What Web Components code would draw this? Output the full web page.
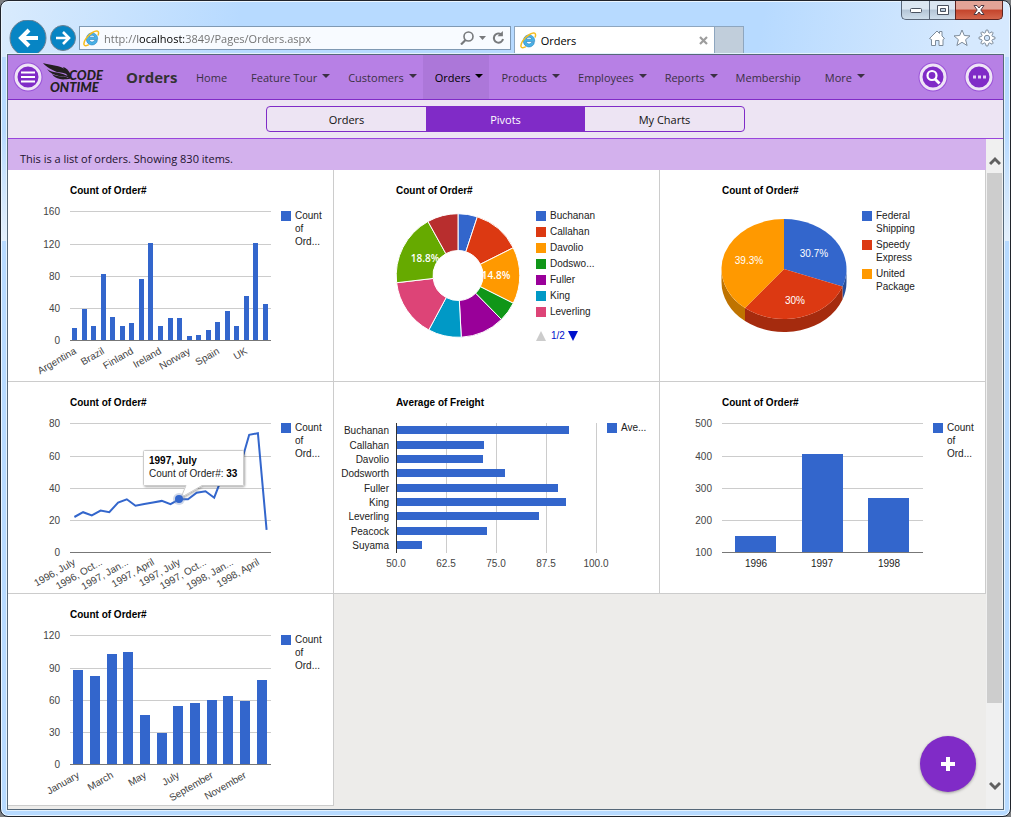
<!DOCTYPE html>
<html lang="en">
<head>
<meta charset="utf-8">
<title>Orders</title>
<style>
  html { background: #7d7f82; }
  body { margin: 0; font-family: "Open Sans", "Noto Sans", sans-serif; font-size: 11px; color: #333; }
</style>
</head>
<body>
<browser-window url="http://localhost:3849/Pages/Orders.aspx" page-title="Orders">
  <app-header slot="page" heading="Orders">
    <nav-item>Home</nav-item>
    <nav-item menu>Feature Tour</nav-item>
    <nav-item menu>Customers</nav-item>
    <nav-item menu current>Orders</nav-item>
    <nav-item menu>Products</nav-item>
    <nav-item menu>Employees</nav-item>
    <nav-item menu>Reports</nav-item>
    <nav-item>Membership</nav-item>
    <nav-item menu>More</nav-item>
  </app-header>
  <view-tabs slot="page" views="Orders,Pivots,My Charts" selected="1"></view-tabs>
  <scroll-pane slot="page">
    <info-bar>This is a list of orders. Showing 830 items.</info-bar>
    <chart-board>
      <column-chart data-chart="country"></column-chart>
      <donut-chart></donut-chart>
      <pie-chart></pie-chart>
      <line-chart></line-chart>
      <bar-chart></bar-chart>
      <column-chart data-chart="year"></column-chart>
      <column-chart data-chart="month"></column-chart>
    </chart-board>
  </scroll-pane>
</browser-window>

<script>
function define(name, html, setup) {
  const tpl = document.createElement('template');
  tpl.innerHTML = html;
  customElements.define(name, class extends HTMLElement {
    constructor() {
      super();
      this.attachShadow({ mode: 'open' }).append(tpl.content.cloneNode(true));
    }
    connectedCallback() {
      if (setup && !this.ready) { this.ready = true; setup(this, this.shadowRoot); }
    }
  });
}

/* ---------- browser window ---------- */
define('browser-window', `
<style>
  :host { display: flex; flex-direction: column; box-sizing: border-box; min-height: 100vh;
    border: 1px solid #20242c; border-radius: 8px; padding: 0 5px 5px;
    background: linear-gradient(100deg, #d9ebfd 0, rgba(217,235,253,0) 240px, rgba(217,235,253,0) 75%, #d6e9fe 95%) 0 0 / 100% 56px no-repeat,
      linear-gradient(#b7daff 130px, #e3effb 240px) 0 0 / 100% 240px no-repeat, #b7daff;
    box-shadow: inset 0 0 0 1px #eaf5ff; }
  .caption { display: flex; justify-content: flex-end; height: 19px; margin-right: 2px; }
  .caption button { box-sizing: border-box; height: 19px; padding: 0; border: 1px solid #596678; border-top: 0; border-right: 0;
    background: linear-gradient(#dbe6f1 45%, #b4c5d6 50%, #cfdeec); display: grid; place-items: center; }
  .min { width: 28px; border-bottom-left-radius: 5px; }
  .max { width: 26px; }
  .caption .close { width: 48px; border-right: 1px solid #5b2320; border-color: #5b2320; border-bottom-right-radius: 5px;
    background: linear-gradient(#e2a497 45%, #c4442c 50%, #d4664c); }
  .bar { display: flex; height: 33px; overflow: hidden; }
  button, a { font: inherit; }
  .round { border: 0; padding: 0; background: none; display: block; flex: none; }
  .back { width: 38px; height: 37px; margin-left: 3px; }
  .fwd { width: 26px; height: 26px; margin: 5px 3px 0 3px; }
  .address { box-sizing: border-box; display: flex; align-items: center; height: 24px; margin-top: 6px; flex: 422 1 0;
    border: 1px solid #7f99b3; background: #f8fbff; padding: 0 4px 0 3px; gap: 4px; min-width: 0; }
  .address input { flex: 1; min-width: 0; border: 0; padding: 0; outline: 0; height: 20px; font: 11px "Open Sans", sans-serif;
    -webkit-text-fill-color: transparent; -webkit-background-clip: text; background-clip: text;
    background-image: linear-gradient(90deg, #6d6d6d 34px, #000 34px, #000 80px, #6d6d6d 80px); }
  .address button { border: 0; background: none; padding: 0; display: block; }
  .tab { box-sizing: border-box; display: flex; align-items: center; flex: none; width: 201px; margin: 6px 0 0 3px; height: 27px; gap: 4px;
    border: 1px solid #8ea6bf; border-bottom: 0; background: #fff; padding: 0 6px 0 5px; color: #000; }
  .tab a { flex: 1; color: inherit; text-decoration: none; }
  .tab button { border: 0; background: none; padding: 0; display: block; }
  .new { box-sizing: border-box; flex: none; width: 29px; margin-top: 6px; height: 27px; border: 1px solid #8ea6bf; border-width: 1px 1px 0 0; padding: 0; background: #c1cedb; }
  .tools { flex: 253 1 0; display: flex; justify-content: flex-end; gap: 5px; padding: 8px 8px 0 0; }
  .tools button { border: 0; background: none; padding: 0; width: 20px; height: 20px; }
  svg { display: block; }
  .page { flex: 1; display: flex; flex-direction: column; border: 1px solid #566879; box-shadow: 0 0 0 1px #e4f2fd; margin: 1px; position: relative; background: #edecea; }
  .add { position: absolute; right: 27px; bottom: 17px; width: 56px; height: 56px; border: 0; border-radius: 50%; padding: 0;
    background: #802bc7; display: grid; place-items: center; box-shadow: 0 1px 3px rgba(0,0,0,.35); }
</style>
<div class="caption">
  <button class="min" aria-label="Minimize"><svg width="14" height="8"><rect x="1.5" y="2.5" width="11" height="4" rx="1" fill="#fff" stroke="#4a5260"/></svg></button>
  <button class="max" aria-label="Maximize"><svg width="14" height="12"><path d="M1.500 1.500h11v9h-11zM4.500 4.500v3h5v-3z" fill="#fff" fill-rule="evenodd" stroke="#4a5260"/></svg></button>
  <button class="close" aria-label="Close window"><svg width="14" height="12"><path d="M2 1.500h3l2 2.500 2-2.500h3L8.800 6 12 10.500H9L7 8l-2 2.500H2L5.200 6z" fill="#fff" stroke="#4d3a44"/></svg></button>
</div>
<div class="bar">
  <button class="round back" aria-label="Back"><svg width="38" height="37" viewBox="0 0 38 37"><circle cx="19" cy="18" r="18" fill="#0785c4" stroke="#6c8091"/><path d="M29 18H12M20 10l-8 8 8 8" fill="none" stroke="#fff" stroke-width="4"/></svg></button>
  <button class="round fwd" aria-label="Forward"><svg width="26" height="26" viewBox="0 0 26 26"><circle cx="13" cy="13" r="12.500" fill="#0785c4" stroke="#6c8091"/><path d="M6 13h12M13 7l6 6-6 6" fill="none" stroke="#fff" stroke-width="2.600"/></svg></button>
  <div class="address">
    <ie-icon></ie-icon><input aria-label="Address" spellcheck="false">
    <button aria-label="Search"><svg width="14" height="14" fill="none" stroke="#77797c"><circle cx="8.500" cy="5.500" r="4.500" stroke-width="1.600"/><path d="M5.500 9L1 13.500" stroke-width="2.200"/></svg></button>
    <button aria-label="Show address list"><svg width="9" height="6"><path d="M1 1h7L4.500 5z" fill="#77797c"/></svg></button>
    <button aria-label="Refresh"><svg width="15" height="14" fill="none" stroke="#77797c" stroke-width="2"><path d="M10 3.200A4.600 4.600 0 1 0 12 8"/><path d="M6.500 5.200h5.400V0z" fill="#77797c" stroke="none"/></svg></button>
  </div>
  <div class="tab"><ie-icon></ie-icon><a href="#"></a>
    <button aria-label="Close tab"><svg width="9" height="9"><path d="M1 1l7 7M8 1L1 8" stroke="#9d9d9d" stroke-width="2.200"/></svg></button></div>
  <button class="new" aria-label="New tab"></button>
  <div class="tools">
    <button aria-label="Home"><svg width="20" height="20" viewBox="0 0 20 20"><path d="M2.500 10.500L10 3l2.500 2.500V3.500h2.500V8l2.500 2.500-1.500 1V17.500h-4v-5h-3.500v5h-4v-6z" fill="#fff" stroke="#7d8b9a"/></svg></button>
    <button aria-label="Favorites"><svg width="20" height="20" viewBox="0 0 20 20"><path d="M10 2l2.300 5.500 5.700.4-4.400 3.800 1.500 5.800L10 14.300l-5.100 3.200 1.500-5.800L2 7.900l5.700-.4z" fill="#fff" stroke="#7d8b9a"/></svg></button>
    <button aria-label="Tools"><svg width="20" height="20" viewBox="0 0 20 20"><g fill="#fff" stroke="#7d8b9a"><path class="gear"/><circle cx="10" cy="10" r="2.700" fill="#cfe4fb"/></g></svg></button>
  </div>
</div>
<main class="page"><slot name="page"></slot>
  <button class="add" aria-label="New order"><svg width="14" height="14"><path d="M7 0v14M0 7h14" stroke="#fff" stroke-width="4"/></svg></button>
</main>`, (host, root) => {
  root.querySelector('input').value = host.getAttribute('url');
  root.querySelector('.tab a').textContent = host.getAttribute('page-title');
  let d = '';
  for (let i = 0; i < 32; i++) {
    const r = i % 4 < 2 ? 8 : 5.6, a = (i - 0.5) * Math.PI / 16;
    d += (i ? 'L' : 'M') + (10 + r * Math.sin(a)).toFixed(1) + ' ' + (10 - r * Math.cos(a)).toFixed(1);
  }
  root.querySelector('.gear').setAttribute('d', d + 'z');
});

define('ie-icon', `
<style>:host { display: block; width: 17px; height: 17px; flex: none; } svg { display: block; }</style>
<svg width="17" height="17" viewBox="0 0 17 17"><path d="M14.700 9.500H6.300c.2 2.600 4 3.400 5 1h3.100c-1.200 6.300-11 6-11-1.500 0-8.300 11.700-8 11.300.5zM6.400 7.200h5.300c-.3-2.700-4.900-2.700-5.300 0z" fill="#49b1e6" stroke="#1f7fc0" stroke-width=".6"/><path d="M15 5.500c1.800-4.700-1-5.800-5.500-3C4.500 5.300.2 11.500 1 14.600c.5 1.700 2.600 1.400 4.800.1" fill="none" stroke="#f5bd20" stroke-width="1.500"/></svg>`);

/* ---------- application header ---------- */
define('app-header', `
<style>
  :host { display: flex; align-items: center; height: 44px; background: #b780e5; border-bottom: 1px solid #802bc7; padding: 0 9px 0 5px; }
  .logo { display: block; margin-left: 0; }
  h1 { margin: 0 8px 0 18px; width: 50px; font-size: 15px; line-height: 20px; white-space: nowrap; }
  nav { display: flex; flex: 1; align-self: stretch; }
  button { width: 30px; height: 30px; border: 0; padding: 0; background: none; flex: none; }
  .search { margin-right: 16px; }
  svg { display: block; }
  text { font: italic 900 13px Lato, sans-serif; }
</style>
<button aria-label="Menu"><svg width="30" height="30"><circle cx="15" cy="15" r="14.500" fill="#9a52d8"/><circle cx="15" cy="15" r="12" fill="#802bc7" stroke="#eee4f6" stroke-width="3"/><path d="M8 10.500h14M8 15h14M8 19.500h14" stroke="#fff" stroke-width="2"/></svg></button>
<svg class="logo" width="65" height="36" viewBox="0 0 65 36" fill="#231f20" role="img" aria-label="Code OnTime">
  <path d="M0 4C7 6 14 6 20 9c4 2 6 5 8 10-5-6-9-5-14-6C9 11 3 8 0 4z"/><path d="M4 10c5 4 11 3 16 5 4 2 7 2 8 4-5-2-8-1-12-2-5-1-9-3-12-7z"/><path d="M9 15c5 3 10 2 14 3 2 1 4 1 5 2-5 0-8 1-11 0-4-1-6-2-8-5z"/>
  <path d="M20 8c4 1 7 5 8 9l-2 3z"/>
  <text x="26" y="21">CODE</text>
  <text x="7" y="33">ONTIME</text>
</svg>
<h1></h1>
<nav><slot></slot></nav>
<button class="search" aria-label="Search"><svg width="30" height="30"><circle cx="15" cy="15" r="14.500" fill="#9a52d8"/><circle cx="15" cy="15" r="12" fill="#802bc7" stroke="#eee4f6" stroke-width="3"/><circle cx="14" cy="13.500" r="4.500" fill="none" stroke="#fff" stroke-width="2.200"/><path d="M17 17l4.500 4.500" stroke="#fff" stroke-width="2.800"/></svg></button>
<button aria-label="More actions"><svg width="30" height="30"><circle cx="15" cy="15" r="14.500" fill="#9a52d8"/><circle cx="15" cy="15" r="12" fill="#802bc7" stroke="#eee4f6" stroke-width="3"/><path d="M9 13.500h3v3H9zM14 13.500h3v3h-3zM19 13.500h3v3h-3z" fill="#e6d3f5"/></svg></button>`,
(host, root) => { root.querySelector('h1').textContent = host.getAttribute('heading'); });

define('nav-item', `
<style>
  :host { display: block; }
  a { display: flex; align-items: center; box-sizing: border-box; height: 100%; padding: 0 12px; color: #3b3044; text-decoration: none; font-size: 11px; white-space: nowrap; }
  :host([menu]) a { padding-right: 6px; }
  :host([menu]) a::after { content: ""; margin: 0 0 2px 5px; border: 4px solid transparent; border-top-color: currentColor; border-bottom: 0; }
  :host([current]) a { background: #ac77d9; color: #000; }
</style>
<a href="#"><slot></slot></a>`);

define('view-tabs', `
<style>
  :host { display: flex; justify-content: center; align-items: center; height: 38px; background: #ede4f3; border-bottom: 1px solid #9a45dc; }
  div { display: flex; box-sizing: border-box; width: 100%; max-width: 479px; height: 26px; border: 1px solid #802bc7; border-radius: 4px; overflow: hidden; }
  button { flex: 1; border: 0; padding: 0; background: none; color: #111; font: 11px "Open Sans", sans-serif; }
  button[aria-selected=true] { background: #802bc7; color: #fff; }
</style>
<div role="tablist"></div>`, (host, root) => {
  host.getAttribute('views').split(',').forEach((name, i) => {
    const b = document.createElement('button');
    b.textContent = name;
    b.setAttribute('role', 'tab');
    b.setAttribute('aria-selected', String(String(i) === host.getAttribute('selected')));
    root.querySelector('div').append(b);
  });
});

define('scroll-pane', `
<style>
  :host { display: flex; flex: 1; }
  .content { flex: 1; min-width: 0; }
  .track { box-sizing: border-box; width: 17px; padding: 10px 1px 13px; background: #f0f0f0; display: grid; grid-template-rows: 24px 1fr 21px; }
  .thumb { height: 88%; background: #cdcdcd; }
  button { border: 0; padding: 0; background: none; display: grid; place-items: center; }
</style>
<div class="content"><slot></slot></div>
<div class="track">
  <button aria-label="Scroll up"><svg width="12" height="10"><path d="M1 8l5-5 5 5" fill="none" stroke="#606060" stroke-width="3"/></svg></button>
  <div class="thumb"></div>
  <button aria-label="Scroll down"><svg width="12" height="10"><path d="M1 2l5 5 5-5" fill="none" stroke="#606060" stroke-width="3"/></svg></button>
</div>`);

define('info-bar', `
<style>:host { display: block; box-sizing: border-box; height: 31px; padding: 10px 12px 0; line-height: 20px; background: #d3b1ed; color: #22122f; white-space: nowrap; }</style>
<slot></slot>`);

define('chart-board', `
<style>
  :host { display: grid; grid-template-columns: repeat(3, 1fr); }
  ::slotted(*) { background: #fff; border: 1px solid #ccc; border-width: 0 1px 1px 0; }
</style>
<slot></slot>`);

/* ---------- charts ---------- */
const COLORS = ['#3366cc', '#dc3912', '#ff9900', '#109618', '#990099', '#0099c6', '#dd4477', '#66aa00', '#b82e2e'];
const LEFT = 62, WIDTH = 201, TOP = 41, BASE = 170;
const STYLE = `<style>
  :host { display: block; }
  svg { display: block; width: 100%; height: auto; font: 10px "Liberation Sans", Arial, sans-serif; fill: #222; }
  .title, .b { font-weight: bold; fill: #000; }
  .axis { fill: #444; }
  .end { text-anchor: end; }
  .mid { text-anchor: middle; }
  .pct { fill: #fff; text-anchor: middle; }
</style>`;
const rect = (x, y, w, h, c) => `<rect x="${x}" y="${y}" width="${w}" height="${h}" fill="${c}"/>`;
const text = (x, y, s, cls = '') => `<text x="${x}" y="${y}" class="${cls}">${s}</text>`;
const slanted = (x, y, s) => `<text transform="translate(${x} ${y}) rotate(-30)" class="end axis">${s}</text>`;
const draw = (title, body) => `${STYLE}<svg viewBox="0 0 325 211" role="img" aria-label="${title}">${text(LEFT, 24, title, 'title')}${body}</svg>`;
const legend = (x, entries) => {
  let y = TOP, out = '';
  entries.forEach((lines, i) => {
    out += rect(x, y, 10, 10, COLORS[i]);
    lines.forEach((s, k) => { out += text(x + 14, y + 8 + k * 13, s); });
    y += 3 + 13 * lines.length;
  });
  return out;
};
const valueAxis = (labels) => labels.map((s, i) => {
  const y = BASE - Math.floor(i * 129 / 4);
  return rect(LEFT, y, WIDTH, 1, '#ccc') + text(52, y + 4, s, 'end axis');
}).join('');
const baseline = rect(LEFT, BASE, WIDTH, 1, '#777');
const COUNT = [['Count', 'of', 'Ord...']];

const COLUMN_SETS = {
  country: { ticks: [0, 40, 80, 120, 160], start: 64, step: 9.55, width: 5, slant: 3,
    values: [16, 40, 19, 83, 30, 18, 22, 77, 122, 19, 28, 28, 6, 7, 13, 23, 37, 18, 56, 122, 46],
    labels: ['Argentina', 'Brazil', 'Finland', 'Ireland', 'Norway', 'Spain', 'UK'] },
  year: { ticks: [100, 200, 300, 400, 500], start: 75, step: 66.6, width: 41, slant: 0,
    values: [152, 408, 270], labels: ['1996', '1997', '1998'] },
  month: { ticks: [0, 30, 60, 90, 120], start: 65.3, step: 16.67, width: 10, slant: 2,
    values: [88, 83, 103, 105, 46, 30, 55, 58, 60, 64, 59, 79],
    labels: ['January', 'March', 'May', 'July', 'September', 'November'] }
};
define('column-chart', '', (host, root) => {
  const s = COLUMN_SETS[host.dataset.chart], lo = s.ticks[0], hi = s.ticks[4];
  let out = valueAxis(s.ticks);
  s.values.forEach((v, i) => {
    const y = Math.round(170.9 - (v - lo) * 129 / (hi - lo));
    out += rect(Math.round(s.start + s.step * i), y, s.width, BASE - y, COLORS[0]);
  });
  s.labels.forEach((name, i) => {
    const mid = Math.round(s.start + s.step * i * (s.slant || 1) + s.width / 2);
    out += s.slant ? slanted(mid + 2, 183, name) : text(mid, 185, name, 'mid');
  });
  root.innerHTML = draw('Count of Order#', out + baseline + legend(273, COUNT));
});

define('line-chart', '', (host, root) => {
  const values = [22, 25, 23, 26, 25, 31, 33, 29, 30, 31, 32, 30, 33, 33, 37, 38, 34, 48, 55, 54, 73, 74, 14];
  const x = i => LEFT + WIDTH * (i + 0.5) / values.length, y = v => 170.5 - v * 129 / 80;
  let out = valueAxis([0, 20, 40, 60, 80]) + baseline;
  out += `<polyline points="${values.map((v, i) => x(i).toFixed(1) + ',' + y(v).toFixed(1)).join(' ')}" fill="none" stroke="#3366cc" stroke-width="2"/>`;
  ['1996, July', '1996, Oct...', '1997, Jan...', '1997, April', '1997, July', '1997, Oct...', '1998, Jan...', '1998, April']
    .forEach((s, i) => { out += slanted(Math.round(x(i * 3)) + 2, 182, s); });
  out += `<defs><filter id="soft" x="-20%" y="-30%" width="150%" height="170%"><feDropShadow dx="1" dy="1" stdDeviation="1" flood-opacity=".35"/></filter></defs>
    <path d="M136.500 68.500h98q1 0 1 1v33q0 1-1 1H194L173 115.500 178 103.500H136.500q-1 0-1-1v-33q0-1 1-1z" fill="#fff" stroke="#ccc" filter="url(#soft)"/>
    <circle cx="171" cy="117" r="6" fill="#7a93bd" opacity=".35"/><circle cx="171" cy="117" r="4" fill="#3366cc"/>`;
  out += text(141, 82, '1997, July', 'b') + text(141, 95, 'Count of Order#: <tspan class="b">33</tspan>');
  root.innerHTML = draw('Count of Order#', out + legend(273, COUNT));
});

define('bar-chart', '', (host, root) => {
  let out = ['50.0', '62.5', '75.0', '87.5', '100.0'].map((s, i) =>
    rect(LEFT + i * 50, TOP, 1, 130, '#ccc') + text(LEFT + i * 50, 185, s, 'mid axis')).join('');
  [['Buchanan', 93.2], ['Callahan', 72], ['Davolio', 71.7], ['Dodsworth', 77.2], ['Fuller', 90.5], ['King', 92.5], ['Leverling', 85.8], ['Peacock', 72.8], ['Suyama', 56.4]]
    .forEach(([name, v], i) => {
      const y = Math.round(44.4 + i * 14.33);
      out += rect(LEFT, y, Math.round((v - 50) * 4), 8, COLORS[0]) + text(55, y + 8, name, 'end');
    });
  root.innerHTML = draw('Average of Freight', out + rect(LEFT, TOP, 1, 130, '#333') + legend(273, [['Ave...']]));
});

define('donut-chart', '', (host, root) => {
  const counts = [42, 104, 123, 43, 96, 72, 127, 156, 67], cx = 124, cy = 105.5, R = 61.8, r = 25;
  let sum = 0, out = '';
  const p = (rad, n) => { const a = n / 830 * 2 * Math.PI; return (cx + rad * Math.sin(a)).toFixed(2) + ' ' + (cy - rad * Math.cos(a)).toFixed(2); };
  counts.forEach((n, i) => {
    const a = sum, b = sum += n;
    out += `<path d="M${p(R, a)}A${R} ${R} 0 0 1 ${p(R, b)}L${p(r, b)}A${r} ${r} 0 0 0 ${p(r, a)}z" fill="${COLORS[i]}" stroke="#fff"/>`;
  });
  out += `<g font-family="Open Sans" font-weight="600">${text(162, 109, '14.8%', 'pct')}${text(91, 92, '18.8%', 'pct')}</g>`;
  out += legend(202, [['Buchanan'], ['Callahan'], ['Davolio'], ['Dodswo...'], ['Fuller'], ['King'], ['Leverling']]);
  out += `<path d="M207 161l5 10h-10z" fill="#ccc"/><path d="M234 161h10l-5 10z" fill="#0011cc"/><text x="217" y="169" fill="#0011cc">1/2</text>`;
  root.innerHTML = draw('Count of Order#', out);
});

define('pie-chart', '', (host, root) => {
  const counts = [255, 249, 326], cx = 124, cy = 99, rx = 62.5, ry = 50, depth = 13;
  const at = n => { const a = n / 830 * 2 * Math.PI; return [cx + rx * Math.sin(a), cy - ry * Math.cos(a)]; };
  const side = (from, to, c) => {
    const [x1, y1] = at(from), [x2, y2] = at(to);
    return `<path d="M${x1} ${y1}A${rx} ${ry} 0 0 1 ${x2} ${y2}v${depth}A${rx} ${ry} 0 0 0 ${x1} ${y1 + depth}z" fill="${c}"/>`;
  };
  let sum = 0, out = side(207.5, 255, '#264d99') + side(255, 504, '#a52b0e') + side(504, 622.5, '#bf7300');
  counts.forEach((n, i) => {
    const [x1, y1] = at(sum), [x2, y2] = at(sum += n);
    out += `<path d="M${cx} ${cy}L${x1} ${y1}A${rx} ${ry} 0 0 1 ${x2} ${y2}z" fill="${COLORS[i]}"/>`;
  });
  out += text(154, 87, '30.7%', 'pct') + text(135, 134, '30%', 'pct') + text(89, 94, '39.3%', 'pct');
  root.innerHTML = draw('Count of Order#', out + legend(202, [['Federal', 'Shipping'], ['Speedy', 'Express'], ['United', 'Package']]));
});
</script>
</body>
</html>
